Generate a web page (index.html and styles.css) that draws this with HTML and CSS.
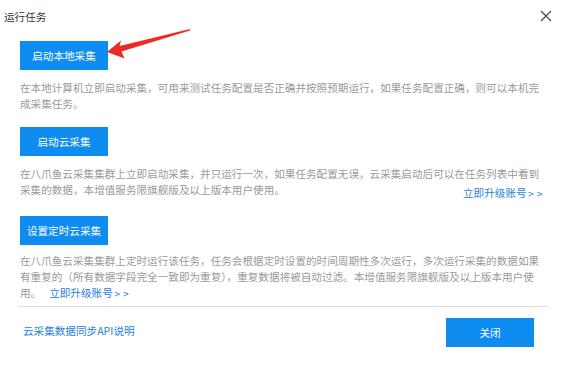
FILE: index.html
```html
<!DOCTYPE html>
<html lang="zh-CN">
<head>
<meta charset="utf-8">
<title>运行任务</title>
<link rel="stylesheet" href="styles.css">
</head>
<body>
<div class="dialog">
  <div class="header">
    <span class="title">运行任务</span>
    <svg class="close-x" width="12" height="12" viewBox="0 0 12 12"><path d="M1 1 L11 11 M11 1 L1 11" stroke="#4a4a4a" stroke-width="1.3" fill="none"/></svg>
  </div>
  <div class="body">
    <div class="section first">
      <button class="btn">启动本地采集</button>
      <div class="desc">在本地计算机立即启动采集，可用来测试任务配置是否正确并按照预期运行，如果任务配置正确，则可以本机完<br>成采集任务。</div>
    </div>
    <div class="section">
      <button class="btn">启动云采集</button>
      <div class="desc">
        <div>在八爪鱼云采集集群上立即启动采集，并只运行一次，如果任务配置无误，云采集启动后可以在任务列表中看到</div>
        <div class="line-row"><span>采集的数据，本增值服务限旗舰版及以上版本用户使用。</span><a class="link upgrade-right">立即升级账号<span class="gt">&gt;&gt;</span></a></div>
      </div>
    </div>
    <div class="section third">
      <button class="btn">设置定时云采集</button>
      <div class="desc">在八爪鱼云采集集群上定时运行该任务，任务会根据定时设置的时间周期性多次运行，多次运行采集的数据如果<br>有重复的（所有数据字段完全一致即为重复），重复数据将被自动过滤。本增值服务限旗舰版及以上版本用户使<br>用。<a class="link upgrade-inline">立即升级账号<span class="gt">&gt;&gt;</span></a></div>
    </div>
    <div class="footer">
      <a class="api-link">云采集数据同步API说明</a>
      <button class="btn close-btn">关闭</button>
    </div>
  </div>
  <svg class="arrow" width="567" height="80" viewBox="0 0 567 80">
    <polygon points="107,52 121,40.5 119.5,46 190,29 190,30.5 121.5,51.5 124.5,58.5" fill="#ee2a24"/>
  </svg>
</div>
</body>
</html>
```

FILE: styles.css
```css
html, body {
  margin: 0;
  padding: 0;
  background: #ffffff;
}
body {
  font-family: "Noto Sans CJK SC", "Noto Sans", sans-serif;
  font-size: 10.6px;
  color: #333;
}
.dialog {
  position: relative;
  width: 567px;
  height: 365px;
  background: #fff;
}
.header {
  display: flex;
  justify-content: space-between;
  align-items: center;
  height: 32px;
  padding: 0 15px 0 4px;
}
.title {
  color: #333;
  font-size: 10.6px;
}
.close-x {
  display: block;
}
.body {
  padding: 9px 19px 0 18px;
}
.section {
  padding-left: 2px;
  margin-top: 15px;
}
.section.first {
  margin-top: 0;
}
.section.third {
  margin-top: 18px;
}
.btn {
  display: block;
  width: 88px;
  height: 29px;
  padding: 0;
  border: none;
  background: #0f8cf0;
  color: #fff;
  font-family: "Noto Sans CJK SC", sans-serif;
  font-size: 10.6px;
  line-height: 16px;
  cursor: pointer;
}
.desc {
  margin-top: 10px;
  line-height: 16px;
  color: #9a9a9a;
  white-space: nowrap;
}
.section.third .desc {
  margin-top: 8px;
}
.line-row {
  display: flex;
  align-items: flex-start;
  justify-content: space-between;
  width: 525px;
  height: 16px;
}
.link {
  color: #1f80dc;
  cursor: pointer;
}
.upgrade-right {
  margin-top: 3px;
}
.upgrade-inline {
  margin-left: 8px;
}
.gt {
  font-family: "DejaVu Sans", sans-serif;
  font-size: 8px;
  line-height: 1;
  letter-spacing: 2px;
  margin-left: 1px;
}
.footer {
  display: flex;
  justify-content: space-between;
  align-items: center;
  margin-top: 5px;
  border-top: 1px solid #dddddd;
  padding: 11px 14px 0 5px;
}
.api-link {
  color: #1f80dc;
  margin-top: -4px;
  cursor: pointer;
}
.close-btn {
  width: 88px;
  height: 29px;
}
.arrow {
  position: absolute;
  left: 0;
  top: 0;
  pointer-events: none;
}
```
